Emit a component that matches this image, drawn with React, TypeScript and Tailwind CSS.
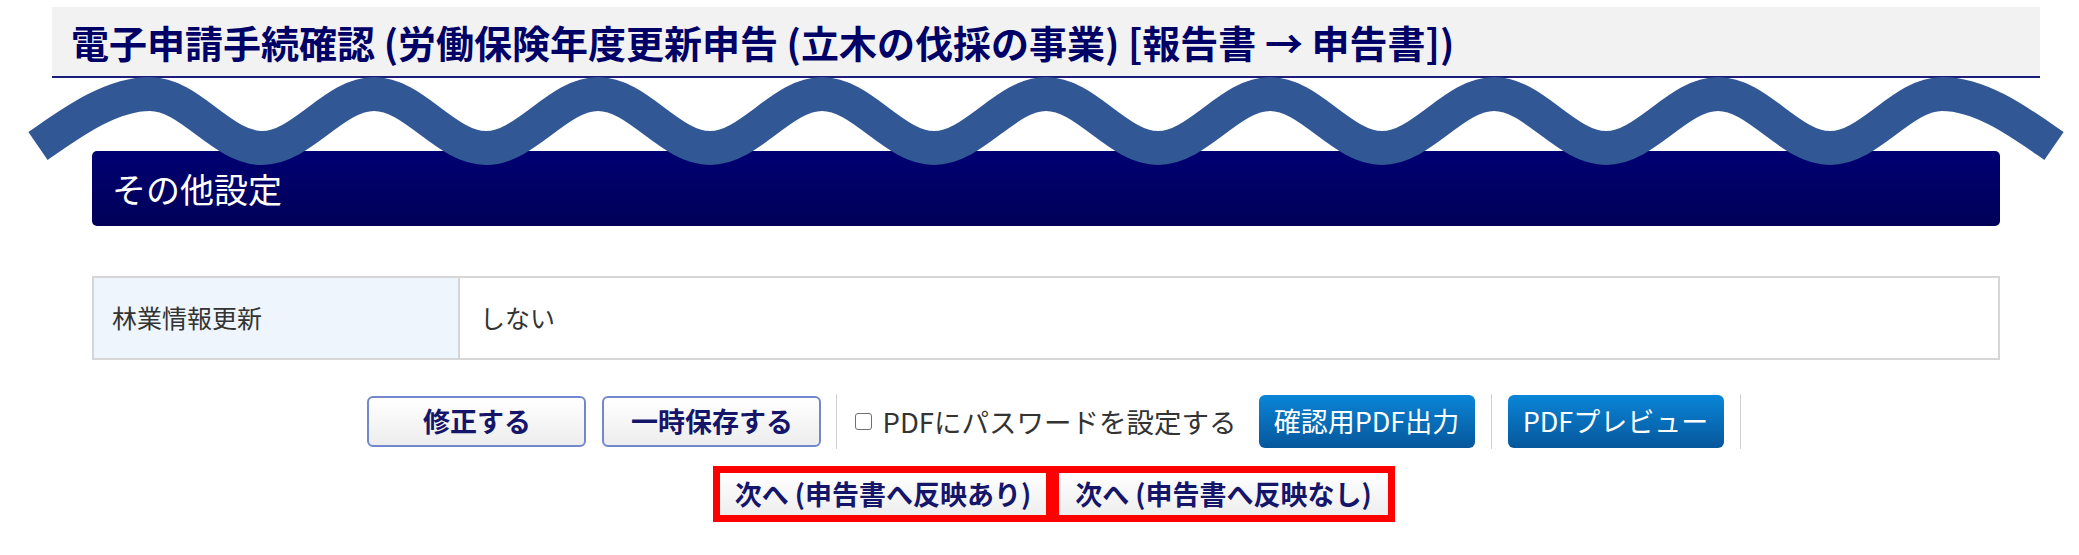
import React from 'react';

// wave overlay drawn over the page (annotation)
const wavePath = (() => {
  const L = 112;
  const top = 94;
  const bot = 148;
  const k = 40;
  let d = `M38,146 C70,124 ${150 - k},${top} 150,${top}`;
  let x = 150;
  let y = top;
  for (let i = 0; i < 16; i++) {
    const nx = x + L;
    const ny = y === top ? bot : top;
    d += ` C${x + k},${y} ${nx - k},${ny} ${nx},${ny}`;
    x = nx;
    y = ny;
  }
  d += ` C${x + k},${y} 2022,124 2054,146`;
  return d;
})();

const Separator = ({ className = '' }: { className?: string }) => (
  <div className={`w-px h-[55px] bg-[#d0d0d0] ${className}`} />
);

export default function App() {
  return (
    <div className="relative min-h-[555px] bg-white pl-[52px] pr-[39px] pt-[7px] font-['Noto_Sans_CJK_JP',sans-serif]">
      {/* Page title */}
      <div className="h-[71px] bg-[#f2f2f2] border-b-2 border-[#1c1c7a] flex items-center pl-[19px]">
        <h1 className="text-[38px] font-bold text-[#000066] leading-none whitespace-nowrap">
          電子申請手続確認 (労働保険年度更新申告 (立木の伐採の事業) [報告書 → 申告書])
        </h1>
      </div>

      <div className="px-10">
        {/* Section heading */}
        <div className="mt-[73px] h-[75px] rounded-[5px] bg-linear-to-b from-[#000072] to-[#000058] flex items-center pl-5">
          <h2 className="text-[34px] text-white leading-none">その他設定</h2>
        </div>

        {/* Settings table */}
        <table className="mt-[50px] w-full border-collapse">
          <tbody>
            <tr className="h-[82px]">
              <th className="w-[366px] border-2 border-[#d6d6d6] bg-[#eef5fc] text-left font-normal pl-[18px] text-[25px] text-[#333]">
                林業情報更新
              </th>
              <td className="border-2 border-[#d6d6d6] pl-5 text-[25px] text-[#333]">しない</td>
            </tr>
          </tbody>
        </table>

        {/* Action buttons */}
        <div className="mt-[34px] flex items-center justify-center pl-4">
          <button className="w-[219px] h-[51px] rounded-[6px] border-2 border-[#7387cc] bg-linear-to-b from-white to-[#ededed] text-[27px] font-bold text-[#15156a]">
            修正する
          </button>
          <button className="ml-4 w-[219px] h-[51px] rounded-[6px] border-2 border-[#7387cc] bg-linear-to-b from-white to-[#ededed] text-[27px] font-bold text-[#15156a]">
            一時保存する
          </button>
          <Separator className="ml-[15px]" />
          <label className="ml-[18px] flex items-center">
            <span className="w-[17px] h-[17px] rounded-[3px] border-[1.5px] border-[#707070] bg-white" />
            <span className="ml-[10px] text-[27.5px] text-[#333] whitespace-nowrap">PDFにパスワードを設定する</span>
          </label>
          <button className="ml-[22px] w-[216px] h-[53px] rounded-[6px] bg-linear-to-b from-[#0a86d8] to-[#06579b] text-[27px] text-white">
            確認用PDF出力
          </button>
          <Separator className="ml-4" />
          <button className="ml-4 w-[216px] h-[53px] rounded-[6px] bg-linear-to-b from-[#0a86d8] to-[#06579b] text-[27px] text-white">
            PDFプレビュー
          </button>
          <Separator className="ml-4" />
        </div>

        {/* Next buttons (highlighted) */}
        <div className="mt-[17px] flex justify-center pl-4">
          <div className="flex gap-[13px] bg-[#ff0000] p-[7px]">
            <button className="w-[326px] h-[42px] bg-linear-to-b from-white to-[#eeeeee] text-[27px] font-bold text-[#15156a] whitespace-nowrap">
              次へ (申告書へ反映あり)
            </button>
            <button className="w-[329px] h-[42px] bg-linear-to-b from-white to-[#eeeeee] text-[27px] font-bold text-[#15156a] whitespace-nowrap">
              次へ (申告書へ反映なし)
            </button>
          </div>
        </div>
      </div>

      <svg
        className="absolute left-0 top-0 pointer-events-none"
        width={2079}
        height={200}
        viewBox="0 0 2079 200"
      >
        <path d={wavePath} fill="none" stroke="#315895" strokeWidth={34} strokeLinecap="butt" />
      </svg>
    </div>
  );
}
